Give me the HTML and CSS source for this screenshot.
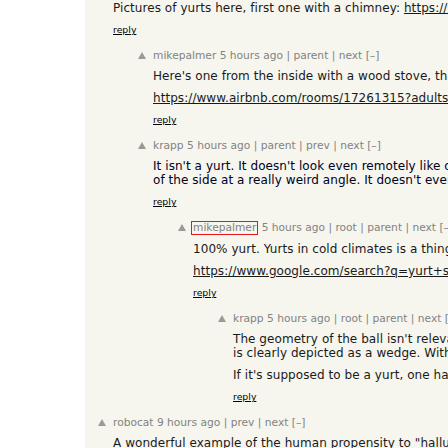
FILE: index.html
```html
<!DOCTYPE html>
<html>
<head>
<meta charset="utf-8">
<title>Hacker News thread</title>
<link rel="stylesheet" href="styles.css">
</head>
<body>
<div class="page">
  <div class="gutter"></div>
  <div class="main">
    <div class="comment l0 first">
      <div class="vote"></div>
      <div class="body">
        <div class="text"><p>Pictures of yurts here, first one with a chimney: <a href="#">https://www.google.com/search?q=yurt&amp;tbm=isch</a></p></div>
        <div class="reply"><a href="#">reply</a></div>
      </div>
    </div>

    <div class="comment l1">
      <div class="vote"><svg class="arrow" width="8" height="7" viewBox="0 0 8 7"><path d="M4 0L8 7H0Z"/></svg></div>
      <div class="body">
        <div class="head"><a href="#">mikepalmer</a> <a href="#">5 hours ago</a> | <a href="#">parent</a> | <a href="#">next</a> [–]</div>
        <div class="text">
          <p>Here's one from the inside with a wood stove, that's how they stay warm in winter:</p>
          <p><a href="#">https://www.airbnb.com/rooms/17261315?adults=1</a></p>
        </div>
        <div class="reply"><a href="#">reply</a></div>
      </div>
    </div>

    <div class="comment l1">
      <div class="vote"><svg class="arrow" width="8" height="7" viewBox="0 0 8 7"><path d="M4 0L8 7H0Z"/></svg></div>
      <div class="body">
        <div class="head"><a href="#">krapp</a> <a href="#">5 hours ago</a> | <a href="#">parent</a> | <a href="#">prev</a> | <a href="#">next</a> [–]</div>
        <div class="text">
          <p class="dark">It isn't a yurt. It doesn't look even remotely like one, the red part<br>of the side at a really weird angle. It doesn't even have</p>
        </div>
        <div class="reply"><a href="#">reply</a></div>
      </div>
    </div>

    <div class="comment l2">
      <div class="vote"><svg class="arrow" width="8" height="7" viewBox="0 0 8 7"><path d="M4 0L8 7H0Z"/></svg></div>
      <div class="body">
        <div class="head"><a href="#" class="marked">mikepalmer</a> <a href="#">5 hours ago</a> | <a href="#">root</a> | <a href="#">parent</a> | <a href="#">next</a> [–]</div>
        <div class="text">
          <p>100% yurt. Yurts in cold climates is a thing.</p>
          <p><a href="#">https://www.google.com/search?q=yurt+stove</a></p>
        </div>
        <div class="reply"><a href="#">reply</a></div>
      </div>
    </div>

    <div class="comment l3">
      <div class="vote"><svg class="arrow" width="8" height="7" viewBox="0 0 8 7"><path d="M4 0L8 7H0Z"/></svg></div>
      <div class="body">
        <div class="head"><a href="#">krapp</a> <a href="#">5 hours ago</a> | <a href="#">root</a> | <a href="#">parent</a> | <a href="#">next</a> [–]</div>
        <div class="text">
          <p>The geometry of the ball isn't relevant,<br>is clearly depicted as a wedge. Without</p>
          <p>If it's supposed to be a yurt, one has</p>
        </div>
        <div class="reply"><a href="#">reply</a></div>
      </div>
    </div>

    <div class="comment l0">
      <div class="vote"><svg class="arrow" width="8" height="7" viewBox="0 0 8 7"><path d="M4 0L8 7H0Z"/></svg></div>
      <div class="body">
        <div class="head"><a href="#">robocat</a> <a href="#">9 hours ago</a> | <a href="#">prev</a> | <a href="#">next</a> [–]</div>
        <div class="text">
          <p>A wonderful example of the human propensity to "hallucinate"</p>
        </div>
      </div>
    </div>
  </div>
</div>
</body>
</html>
```

FILE: styles.css
```css
html, body {
  margin: 0;
  padding: 0;
  background: #ffffff;
  overflow: hidden;
}

.page {
  display: flex;
  width: 448px;
  height: 448px;
  overflow: hidden;
  font-family: "DejaVu Sans", Verdana, sans-serif;
}

.gutter {
  flex: 0 0 85px;
  background: #ffffff;
}

.main {
  flex: 1 1 auto;
  min-width: 0;
  background: #f6f6ef;
  padding: 1px 0 0 13px;
  overflow: hidden;
}

.comment {
  display: flex;
  align-items: flex-start;
  padding-bottom: 13px;
}

.comment.l1 { margin-left: 40px; }
.comment.l2 { margin-left: 80px; }
.comment.l3 { margin-left: 120px; }

.vote {
  flex: 0 0 15px;
  padding-top: 3px;
}

.arrow {
  display: block;
  fill: #9a9a9a;
}

.body {
  flex: 0 0 auto;
  white-space: nowrap;
}

.head {
  font-size: 10.67px;
  line-height: 13px;
  color: #828282;
  margin-bottom: 7px;
}

.head a {
  color: #828282;
  text-decoration: none;
}

.head a.marked {
  display: inline-block;
  border: 1px solid #e8161b;
  padding: 0 1px;
  margin-left: -2px;
  line-height: 12px;
}

.text {
  font-size: 12px;
  line-height: 14px;
  color: #1a1a1a;
  letter-spacing: 0.06px;
}

.text p {
  margin: 8px 0 0 0;
}

.text p:first-child {
  margin-top: 0;
}

.text p.dark {
  color: #000022;
}

.text a {
  color: #1a1a1a;
  text-decoration: underline;
}

.reply {
  font-size: 9.33px;
  line-height: 12px;
  margin-top: 9px;
}

.reply a {
  color: #000000;
  text-decoration: underline;
}
```
